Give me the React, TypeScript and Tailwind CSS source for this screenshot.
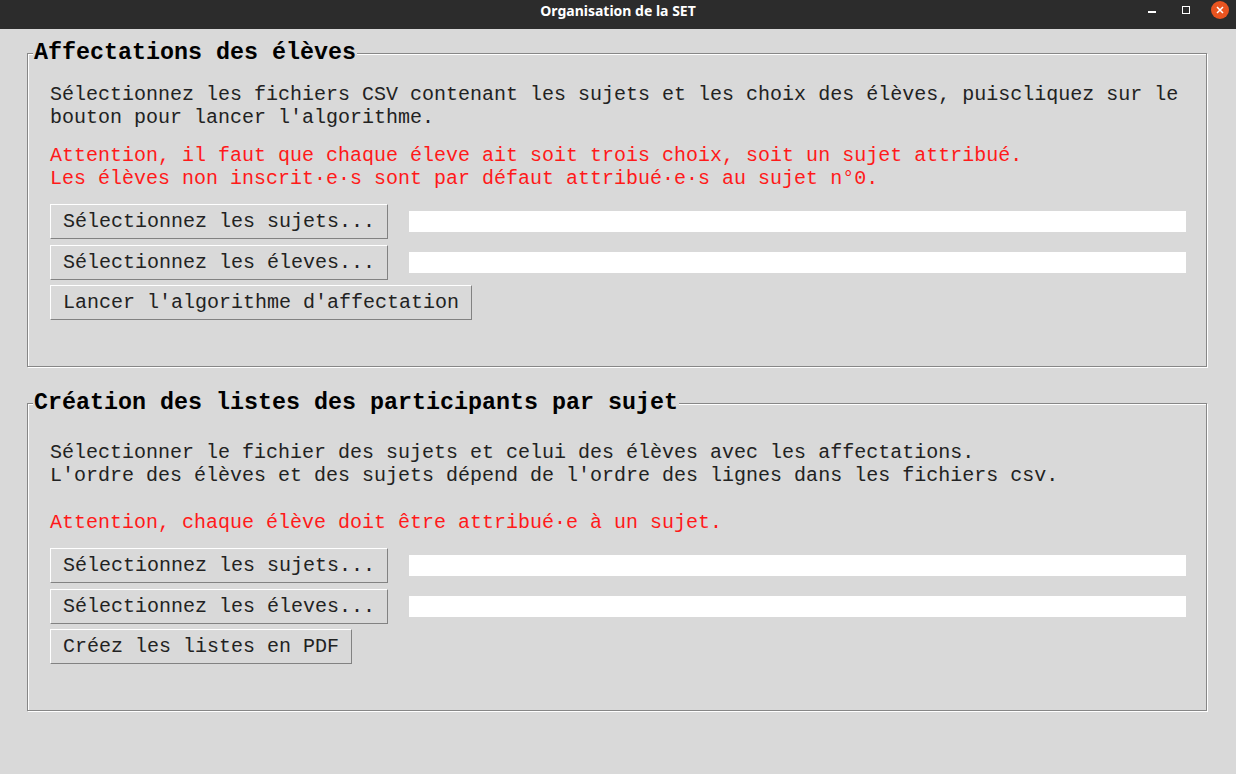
import React from "react";

// --- title bar of the window ---------------------------------------------
const TitleBar = () => (
  <div className="grid h-[29px] grid-cols-[1fr_auto_1fr] bg-[#2c2c2c]">
    <div />
    <div className="pt-[1px] font-['Noto_Sans',sans-serif] text-[14px] font-bold leading-[20px] text-white">
      Organisation de la SET
    </div>
    <div className="flex items-start justify-end">
      <div className="mt-[11px] h-[1.5px] w-[8px] bg-white" />
      <div className="ml-[26px] mt-[6px] h-[8px] w-[8px] border border-white" />
      <div className="ml-[21px] mr-[7px] mt-[1px] flex h-[18px] w-[18px] items-center justify-center rounded-full bg-[#e95420]">
        <svg width="8" height="8" viewBox="0 0 8 8">
          <path d="M1 1L7 7M7 1L1 7" stroke="white" strokeWidth="1.5" />
        </svg>
      </div>
    </div>
  </div>
);

// --- tk widgets -----------------------------------------------------------
const TkButton = ({ children }: { children: React.ReactNode }) => (
  <button className="h-[35px] shrink-0 border border-t-white border-l-white border-b-[#828282] border-r-[#828282] bg-[#d9d9d9] px-[12px] text-left leading-[23px] text-[#222]">
    {children}
  </button>
);

const Entry = () => <div className="ml-[21px] h-[21px] flex-1 bg-white" />;

const FileRow = ({ label, className = "" }: { label: string; className?: string }) => (
  <div className={`flex items-center ${className}`}>
    <TkButton>{label}</TkButton>
    <Entry />
  </div>
);

const Frame = ({
  title,
  className = "",
  children,
}: {
  title: string;
  className?: string;
  children: React.ReactNode;
}) => (
  <fieldset
    className={`border border-[#878787] shadow-[inset_1px_1px_0_#fff,1px_1px_0_#fff] ${className}`}
  >
    <legend className="ml-[5px] bg-[#d9d9d9] px-[1px] text-[23.33px] font-bold leading-[28px] text-black">
      {title}
    </legend>
    <div className="pl-[22px] pr-[20px]">{children}</div>
  </fieldset>
);

export default function App() {
  return (
    <div className="h-[774px] w-[1236px] overflow-hidden bg-[#d9d9d9] font-['Liberation_Mono',monospace] text-[20px]">
      <TitleBar />
      <div className="pl-[27px] pr-[29px]">
        {/* --- frame 1 --- */}
        <Frame title="Affectations des élèves" className="mt-[10px] pb-[46px]">
          <div className="pt-[16px] leading-[23px] text-[#222]">
            <div>Sélectionnez les fichiers CSV contenant les sujets et les choix des élèves, puiscliquez sur le</div>
            <div>bouton pour lancer l'algorithme.</div>
          </div>
          <div className="mt-[15px] leading-[23px] text-[#ff1a1a]">
            <div>Attention, il faut que chaque éleve ait soit trois choix, soit un sujet attribué.</div>
            <div>Les élèves non inscrit·e·s sont par défaut attribué·e·s au sujet n°0.</div>
          </div>
          <FileRow label="Sélectionnez les sujets..." className="mt-[14px]" />
          <FileRow label="Sélectionnez les éleves..." className="mt-[6px]" />
          <div className="mt-[5px] flex">
            <TkButton>Lancer l'algorithme d'affectation</TkButton>
          </div>
        </Frame>

        {/* --- frame 2 --- */}
        <Frame title="Création des listes des participants par sujet" className="mt-[22px] pb-[46px]">
          <div className="pt-[24px] leading-[23px] text-[#222]">
            <div>Sélectionner le fichier des sujets et celui des élèves avec les affectations.</div>
            <div>L'ordre des élèves et des sujets dépend de l'ordre des lignes dans les fichiers csv.</div>
          </div>
          <div className="mt-[24px] leading-[23px] text-[#ff1a1a]">
            <div>Attention, chaque élève doit être attribué·e à un sujet.</div>
          </div>
          <FileRow label="Sélectionnez les sujets..." className="mt-[14px]" />
          <FileRow label="Sélectionnez les éleves..." className="mt-[6px]" />
          <div className="mt-[5px] flex">
            <TkButton>Créez les listes en PDF</TkButton>
          </div>
        </Frame>
      </div>
    </div>
  );
}
